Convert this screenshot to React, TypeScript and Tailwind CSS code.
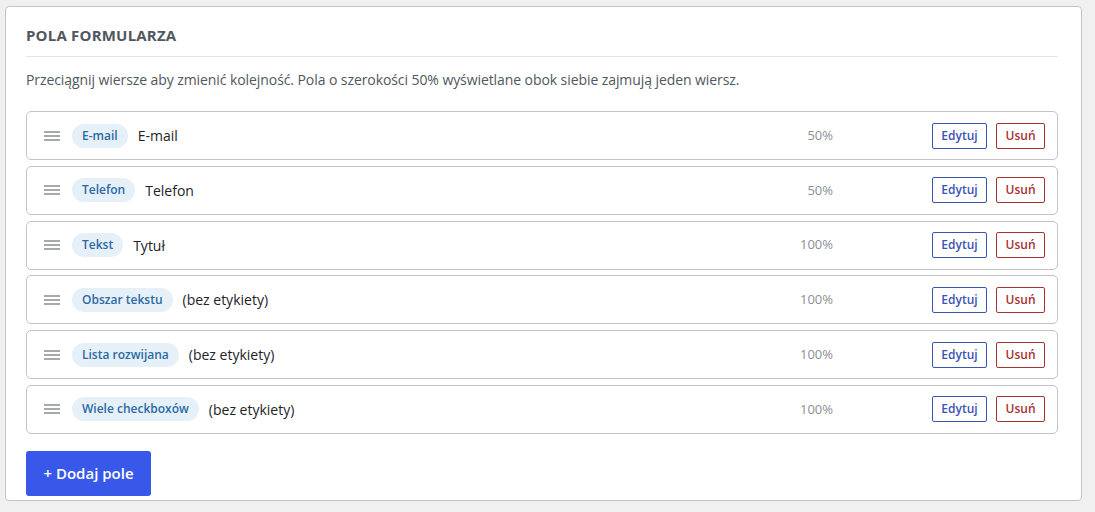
import React from 'react';

type Field = { type: string; label: string; width: string };

const fields: Field[] = [
  { type: 'E-mail', label: 'E-mail', width: '50%' },
  { type: 'Telefon', label: 'Telefon', width: '50%' },
  { type: 'Tekst', label: 'Tytuł', width: '100%' },
  { type: 'Obszar tekstu', label: '(bez etykiety)', width: '100%' },
  { type: 'Lista rozwijana', label: '(bez etykiety)', width: '100%' },
  { type: 'Wiele checkboxów', label: '(bez etykiety)', width: '100%' },
];

function DragHandle() {
  return (
    <svg width="16" height="12" viewBox="0 0 16 12" className="shrink-0">
      <rect x="0" y="1" width="16" height="2" fill="#a7aaad" />
      <rect x="0" y="5" width="16" height="2" fill="#a7aaad" />
      <rect x="0" y="9" width="16" height="2" fill="#a7aaad" />
    </svg>
  );
}

function FieldRow({ field }: { field: Field }) {
  return (
    <div className="flex h-[49px] items-center rounded-[5px] border border-[#c3c4c7] bg-white pl-[17px] pr-[12px]">
      <DragHandle />
      <span className="ml-[12px] flex h-[24px] items-center rounded-full bg-[#e6f0f9] px-[10px] text-[12px] font-semibold text-[#2b6aa3]">
        {field.type}
      </span>
      <span className="ml-[10px] flex-1 text-[14px] text-[#1d2327]">{field.label}</span>
      <span className="mr-[99px] text-[13px] text-[#8c8f94]">{field.width}</span>
      <div className="flex gap-[9px]">
        <button className="h-[26px] w-[55px] rounded-[2px] border border-[#3b54b4] bg-white text-[12px] font-semibold text-[#3b54b4]">
          Edytuj
        </button>
        <button className="h-[26px] w-[49px] rounded-[2px] border border-[#a63232] bg-white text-[12px] font-semibold text-[#a63232]">
          Usuń
        </button>
      </div>
    </div>
  );
}

export default function App() {
  return (
    <div
      className="min-h-[512px] bg-[#f0f0f1] pb-[11px] pl-[5px] pr-[13px] pt-[6px]"
      style={{ fontFamily: '"Open Sans", "Noto Sans", sans-serif' }}
    >
      <div className="rounded-[4px] border border-[#c3c4c7] bg-white pb-[4px] pl-[20px] pr-[23px] pt-[18px]">
        <h2 className="border-b border-[#e5e5e5] pb-[11px] text-[15px] font-bold uppercase leading-[20px] tracking-[0.2px] text-[#50575e]">
          Pola formularza
        </h2>
        <p className="mt-[13px] text-[14px] leading-[20px] tracking-[-0.08px] text-[#50575e]">
          Przeciągnij wiersze aby zmienić kolejność. Pola o szerokości 50% wyświetlane obok siebie zajmują jeden wiersz.
        </p>
        <div className="mt-[21px] flex flex-col gap-[5.8px]">
          {fields.map((f, i) => (
            <FieldRow key={i} field={f} />
          ))}
        </div>
        <button className="mt-[17px] h-[45px] w-[125px] rounded-[3px] bg-[#3858e9] text-[15px] font-semibold text-white">
          + Dodaj pole
        </button>
      </div>
    </div>
  );
}
